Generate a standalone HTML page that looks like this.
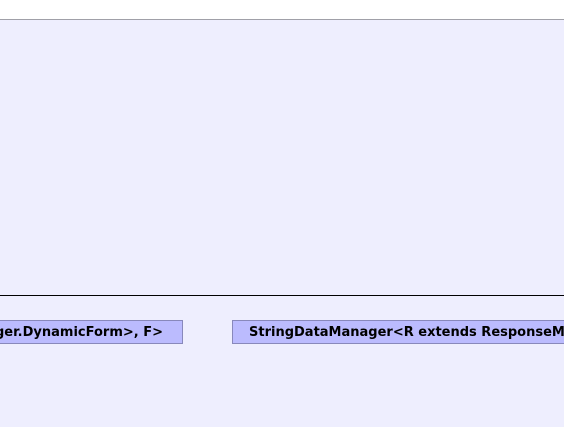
<html><body style="margin:0;width:564px;height:427px;overflow:hidden;background:#EEEEFE;position:relative;font-family:'DejaVu Sans',sans-serif;font-weight:bold;font-size:13px">
<div style="position:absolute;left:0;top:0;width:564px;height:19px;background:#fff;border-bottom:1px solid #a0a0a8"></div>
<div style="position:absolute;left:0;top:295px;width:564px;height:1px;background:#000"></div>
<div style="position:absolute;left:0;top:320px;width:182px;height:22px;background:#BBBBFE;border:1px solid #8888BB;border-left:none;overflow:hidden;line-height:24px;white-space:nowrap"><span style="position:absolute;right:19px;top:0">ger.DynamicForm&gt;, F&gt;</span></div>
<div style="position:absolute;left:232px;top:320px;width:316px;height:22px;background:#BBBBFE;border:1px solid #8888BB;border-right:none;overflow:hidden;line-height:24px;white-space:nowrap;padding-left:16px">StringDataManager&lt;R extends ResponseMessage</div>
</body></html>
